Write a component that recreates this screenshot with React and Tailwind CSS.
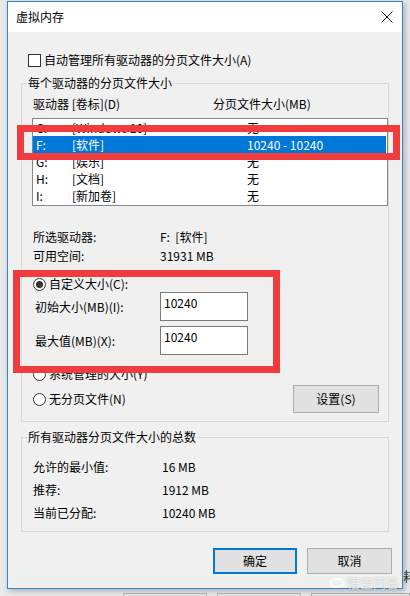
const drives = [
  { letter: 'C:', label: '[Windows 10]', size: '无' },
  { letter: 'F:', label: '[软件]', size: '10240 - 10240', selected: true },
  { letter: 'G:', label: '[娱乐]', size: '无' },
  { letter: 'H:', label: '[文档]', size: '无' },
  { letter: 'I:', label: '[新加卷]', size: '无' },
]

function Radio({ checked, children }) {
  return (
    <div className="flex h-[16px] items-center">
      <span className="flex h-[13px] w-[13px] items-center justify-center rounded-full border border-[#333] bg-white">
        {checked ? <span className="h-[7px] w-[7px] rounded-full bg-[#333]" /> : null}
      </span>
      <span className="ml-[3px]">{children}</span>
    </div>
  )
}

function Field({ value }) {
  return (
    <div className="h-[29px] w-[88px] border border-[#7a7a7a] bg-white pl-[3px] pt-[2px] leading-[16px]">
      {value}
    </div>
  )
}

function WinButton({ children, primary, className = '' }) {
  return (
    <div
      className={`flex items-center justify-center bg-[#e1e1e1] ${
        primary ? 'border-2 border-[#0078d7]' : 'border border-[#adadad]'
      } ${className}`}
    >
      {children}
    </div>
  )
}

export default function App() {
  return (
    <div className="relative h-[596px] w-[410px] overflow-hidden bg-[#e9e9e9] font-['Noto_Sans_CJK_SC',sans-serif] text-[12px] leading-[16px] text-black">
      <div className="pl-[7px] pt-[1px]">
        <div className="flex h-[588px] w-[396px] flex-col border border-[#2f86d6] bg-[#f0f0f0] shadow-[2px_2px_6px_rgba(0,0,0,0.25)]">
          <div className="flex h-[30px] shrink-0 items-center justify-between bg-white pl-[8px] pr-[8px]">
            <span className="text-[12px]">虚拟内存</span>
            <svg width="12" height="12" viewBox="0 0 12 12" className="mr-[1px]">
              <path d="M0.5 0.5 L11.5 11.5 M11.5 0.5 L0.5 11.5" stroke="#111" strokeWidth="1" fill="none" />
            </svg>
          </div>

          <div className="flex flex-1 flex-col px-[13px]">
            <div className="ml-[7px] mt-[20px] flex h-[16px] items-center">
              <span className="h-[13px] w-[13px] border border-[#333] bg-white" />
              <span className="ml-[3px]">自动管理所有驱动器的分页文件大小(A)</span>
            </div>

            <fieldset className="mt-[7px] border border-[#d9d9d9] pb-[8px]">
              <legend className="ml-[5px] px-[1px]">每个驱动器的分页文件大小</legend>
              <div className="mt-[5px] grid grid-cols-[180px_1fr] pl-[11px]">
                <span>驱动器 [卷标](D)</span>
                <span>分页文件大小(MB)</span>
              </div>

              <div className="ml-[10px] mt-[6px] h-[88px] overflow-hidden border border-[#828790] bg-white">
                {drives.map((d) => (
                  <div
                    key={d.letter}
                    className={`mr-[1px] grid h-[17px] grid-cols-[36px_175px_1fr] items-center pl-[3px] ${
                      d.selected ? 'bg-[#0078d7] text-white' : ''
                    }`}
                  >
                    <span>{d.letter}</span>
                    <span>{d.label}</span>
                    <span>{d.size}</span>
                  </div>
                ))}
              </div>

              <div className="mt-[23px] grid grid-cols-[127px_1fr] gap-y-[3px] pl-[11px]">
                <span>所选驱动器:</span>
                <span>F:&nbsp;&nbsp;[软件]</span>
                <span>可用空间:</span>
                <span>31931 MB</span>
              </div>

              <div className="ml-[11px] mt-[12px]">
                <Radio checked>自定义大小(C):</Radio>
              </div>
              <div className="ml-[13px] flex items-center">
                <span className="w-[125px]">初始大小(MB)(I):</span>
                <Field value="10240" />
              </div>
              <div className="ml-[13px] mt-[5px] flex items-center">
                <span className="w-[125px]">最大值(MB)(X):</span>
                <Field value="10240" />
              </div>
              <div className="ml-[11px] mt-[11px]">
                <Radio>系统管理的大小(Y)</Radio>
              </div>
              <div className="ml-[11px] mr-[9px] mt-[3px] flex items-center justify-between">
                <Radio>无分页文件(N)</Radio>
                <WinButton className="h-[28px] w-[86px]">设置(S)</WinButton>
              </div>
            </fieldset>

            <fieldset className="mt-[7px] border border-[#d9d9d9] pb-[10px]">
              <legend className="ml-[5px] px-[1px]">所有驱动器分页文件大小的总数</legend>
              <div className="mt-[14px] grid grid-cols-[129px_1fr] gap-y-[7px] pl-[11px]">
                <span>允许的最小值:</span>
                <span>16 MB</span>
                <span>推荐:</span>
                <span>1912 MB</span>
                <span>当前已分配:</span>
                <span>10240 MB</span>
              </div>
            </fieldset>

            <div className="mr-[-3px] mt-[16px] flex justify-end gap-[10px]">
              <WinButton primary className="h-[26px] w-[84px]">确定</WinButton>
              <WinButton className="h-[26px] w-[85px]">取消</WinButton>
            </div>
          </div>
        </div>
      </div>

      <div className="mt-[4px] flex gap-[10px] pl-[123px]">
        <div className="h-[20px] w-[85px] border border-[#adadad] bg-[#e1e1e1]" />
        <div className="h-[20px] w-[85px] border border-[#adadad] bg-[#e1e1e1]" />
        <div className="h-[20px] w-[100px] border border-[#adadad] bg-[#e1e1e1]" />
      </div>

      <div className="absolute left-[17px] top-[125px] h-[35px] w-[383px] border-[7px] border-[#f03c3c]" />
      <div className="absolute left-[13px] top-[270px] h-[103px] w-[267px] border-[7px] border-[#f03c3c]" />

      <div className="absolute left-[330px] top-[575px] flex items-center gap-[3px] text-[13px] text-white/70 [text-shadow:0_0_2px_rgba(0,0,0,0.25)]">
        <span className="h-[10px] w-[14px] rounded-full border-2 border-white/70" />
        <span>悟空问答</span>
      </div>
      <span className="absolute left-[403px] top-[568px] text-[13px] text-[#333]">耗</span>
    </div>
  )
}
